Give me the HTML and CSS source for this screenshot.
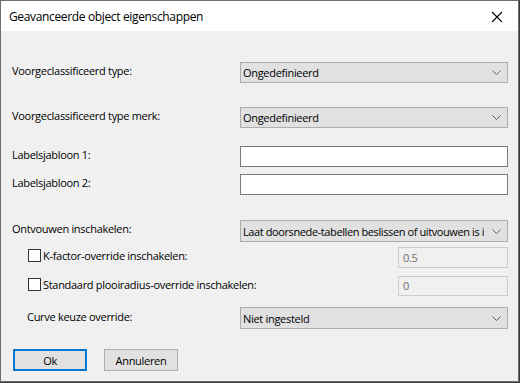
FILE: index.html
```html
<!DOCTYPE html>
<html>
<head>
<meta charset="utf-8">
<link rel="stylesheet" href="styles.css">
</head>
<body>
<div class="dialog">
  <div class="titlebar">
    <span class="title">Geavanceerde object eigenschappen</span>
    <span class="close"><svg width="12" height="12" viewBox="0 0 12 12"><path d="M1 1 L11 11 M11 1 L1 11" stroke="#000" stroke-width="1.1" fill="none"/></svg></span>
  </div>
  <div class="body">
    <div class="row r1">
      <div class="label">Voorgeclassificeerd type:</div>
      <div class="select"><span class="val">Ongedefinieerd</span><svg class="chev" width="9" height="5" viewBox="0 0 9 5"><path d="M0.5 0.5 L4.5 4.5 L8.5 0.5" stroke="#606060" fill="none"/></svg></div>
    </div>
    <div class="row r2">
      <div class="label">Voorgeclassificeerd type merk:</div>
      <div class="select"><span class="val">Ongedefinieerd</span><svg class="chev" width="9" height="5" viewBox="0 0 9 5"><path d="M0.5 0.5 L4.5 4.5 L8.5 0.5" stroke="#606060" fill="none"/></svg></div>
    </div>
    <div class="row r3">
      <div class="label">Labelsjabloon 1:</div>
      <div class="textbox"></div>
    </div>
    <div class="row r4">
      <div class="label">Labelsjabloon 2:</div>
      <div class="textbox"></div>
    </div>
    <div class="row r5">
      <div class="label">Ontvouwen inschakelen:</div>
      <div class="select tall"><span class="val long">Laat doorsnede-tabellen beslissen of uitvouwen is i</span><svg class="chev" width="9" height="5" viewBox="0 0 9 5"><path d="M0.5 0.5 L4.5 4.5 L8.5 0.5" stroke="#606060" fill="none"/></svg></div>
    </div>
    <div class="row r6 sub">
      <div class="check"><span class="box"></span><span class="clabel">K-factor-override inschakelen:</span></div>
      <div class="disabled">0.5</div>
    </div>
    <div class="row r7 sub">
      <div class="check"><span class="box"></span><span class="clabel">Standaard plooiradius-override inschakelen:</span></div>
      <div class="disabled short">0</div>
    </div>
    <div class="row r8">
      <div class="label indent">Curve keuze override:</div>
      <div class="select tall"><span class="val">Niet ingesteld</span><svg class="chev" width="9" height="5" viewBox="0 0 9 5"><path d="M0.5 0.5 L4.5 4.5 L8.5 0.5" stroke="#606060" fill="none"/></svg></div>
    </div>
    <div class="buttons">
      <div class="btn primary">Ok</div>
      <div class="btn">Annuleren</div>
    </div>
  </div>
</div>
</body>
</html>
```
FILE: styles.css
```css
* { box-sizing: border-box; }
html, body { margin: 0; padding: 0; }
body {
  width: 520px;
  height: 383px;
  background: #3c3c3c;
  font-family: "Open Sans", "Noto Sans", sans-serif;
  font-size: 11px;
  letter-spacing: -0.3px;
  color: #000;
  overflow: hidden;
}
.dialog {
  width: 519px;
  height: 382px;
  border: 1px solid #6e6e6e;
  background: #f0f0f0;
  display: flex;
  flex-direction: column;
}
.titlebar {
  height: 30px;
  background: #fff;
  display: flex;
  align-items: center;
  justify-content: space-between;
  padding: 0 15px 0 8px;
  flex: none;
}
.title { font-size: 12px; letter-spacing: -0.35px; padding-top: 1px; }
.close { display: flex; padding-top: 1px; }
.body {
  flex: 1;
  padding: 0 10px 0 11px;
  display: flex;
  flex-direction: column;
}
.row {
  display: flex;
  align-items: flex-start;
  justify-content: space-between;
}
.label { padding-top: 1px; line-height: 16px; }
.label.indent { padding-left: 15px; padding-top: 2px; }
.r1 { margin-top: 31px; }
.r2 { margin-top: 24px; }
.r3 { margin-top: 18px; }
.r4 { margin-top: 7px; }
.r5 { margin-top: 25px; }
.r6 { margin-top: 5px; }
.r7 { margin-top: 8px; }
.r8 { margin-top: 11px; }
.select {
  width: 268px;
  height: 21px;
  background: #e1e1e1;
  border: 1px solid #adadad;
  display: flex;
  align-items: center;
  justify-content: space-between;
  padding: 0 6px 0 2px;
}
.select.tall { height: 22px; }
.val { white-space: nowrap; overflow: hidden; flex: 1; min-width: 0; }
.val.long { letter-spacing: -0.4px; }
.chev { flex: none; margin-left: 2px; }
.textbox {
  width: 268px;
  height: 21px;
  background: #fff;
  border: 1px solid #7a7a7a;
}
.sub { padding-left: 16px; }
.check { display: flex; align-items: center; padding-top: 2px; }
.box {
  width: 13px;
  height: 13px;
  border: 1px solid #333;
  background: #fff;
  margin-right: 2px;
}
.clabel { line-height: 13px; }
.disabled {
  width: 110px;
  height: 21px;
  border: 1px solid #cccccc;
  background: #f0f0f0;
  color: #6d6d6d;
  padding: 2px 0 0 4px;
  line-height: 15px;
}
.disabled.short { height: 20px; padding-top: 1px; }
.buttons {
  margin-top: 20px;
  display: flex;
  gap: 17px;
  padding-left: 1px;
}
.btn {
  width: 74px;
  height: 22px;
  background: #e1e1e1;
  border: 1px solid #adadad;
  display: flex;
  align-items: center;
  justify-content: center;
}
.btn.primary { border: 2px solid #0078d7; }
```
